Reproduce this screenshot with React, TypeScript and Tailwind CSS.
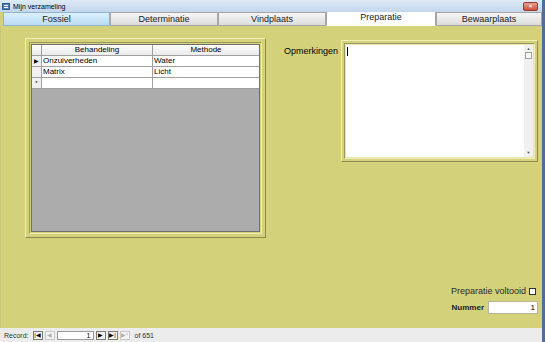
import React from "react";

const font = { fontFamily: '"Liberation Sans", Arial, sans-serif' };

function NavBtn({ children, dim }: { children: React.ReactNode; dim?: boolean }) {
  return (
    <div
      className={`w-[10px] h-[9px] flex items-center justify-center border ${dim ? "border-[#c8c8c8] text-[#b0b0b0]" : "border-[#7a7a7a] text-black"} bg-[#f4f4f4] text-[6px] leading-none`}
    >
      {children}
    </div>
  );
}

export default function App() {
  const tabs = [
    { label: "Fossiel", w: "w-[107px]", cls: "bg-gradient-to-b from-[#dcf0fc] to-[#b9dcf3] border-[#8eb4d0]" },
    { label: "Determinatie", w: "w-[108px]", cls: "bg-gradient-to-b from-[#f6f6f6] to-[#dcdcdc] border-[#a5a5a5]" },
    { label: "Vindplaats", w: "w-[108px]", cls: "bg-gradient-to-b from-[#f6f6f6] to-[#dcdcdc] border-[#a5a5a5]" },
    { label: "Preparatie", w: "w-[110px]", cls: "bg-white border-[#a5a5a5] border-b-white -mt-[1px] pb-[2px]" },
    { label: "Bewaarplaats", w: "w-[106px]", cls: "bg-gradient-to-b from-[#f6f6f6] to-[#dcdcdc] border-[#a5a5a5]" },
  ];
  return (
    <div style={font} className="w-[545px] h-[342px] flex flex-col bg-[#5d7fa6] overflow-hidden">
      {/* title bar */}
      <div className="h-[12px] flex items-center bg-gradient-to-b from-[#dfeaf7] to-[#c3d6ec] border-r-[3px] border-[#4f6f95] relative">
        <div className="ml-[2px] w-[8px] h-[7px] bg-[#4f7fbf] border border-[#2d5b96] flex flex-col justify-center gap-[1px] px-[1px]">
          <div className="h-[1px] bg-white"></div>
          <div className="h-[1px] bg-white"></div>
        </div>
        <span className="ml-[3px] text-[7px] leading-none text-black">Mijn verzameling</span>
        <div className="ml-auto mr-[4px] w-[15px] h-[9px] rounded-[2px] bg-gradient-to-b from-[#e8a090] to-[#c8503a] border border-[#9a3a2a] flex items-center justify-center text-white text-[6px] leading-none font-bold">
          ×
        </div>
      </div>
      {/* tabs */}
      <div className="h-[14px] flex items-stretch bg-[#d4d07a] pl-[3px] border-r-[3px] border-[#4f6f95]">
        {tabs.map((t) => (
          <div
            key={t.label}
            className={`${t.w} ${t.cls} border flex items-center justify-center text-[9px] leading-none text-[#222]`}
          >
            {t.label}
          </div>
        ))}
      </div>
      {/* body */}
      <div className="flex-1 flex bg-[#d4d17b] border-r-[3px] border-[#4f6f95] border-l border-l-[#c9c67a]">
        {/* subform */}
        <div className="pl-[24px] pt-[12px]">
          <div className="w-[241px] h-[200px] border border-t-[#f1efb6] border-l-[#f1efb6] border-r-[#8c8a52] border-b-[#8c8a52] p-[3px]">
            <div className="w-full h-full border border-t-[#9a9860] border-l-[#9a9860] border-r-[#f0eeb2] border-b-[#f0eeb2] p-[1px]">
              <div className="w-full h-full bg-[#acacac] border border-[#707070] flex flex-col text-[8px] leading-none text-black">
                <div className="flex h-[11px] bg-gradient-to-b from-[#fbfbfb] to-[#ececec] border-b border-[#a0a0a0]">
                  <div className="w-[10px] border-r border-[#a0a0a0]"></div>
                  <div className="w-[111px] border-r border-[#a0a0a0] flex items-center justify-center">Behandeling</div>
                  <div className="flex-1 flex items-center justify-center">Methode</div>
                </div>
                {[
                  ["▶", "Onzuiverheden", "Water"],
                  ["", "Matrix", "Licht"],
                  ["*", "", ""],
                ].map((r, i) => (
                  <div key={i} className="flex h-[11px] bg-white border-b border-[#a0a0a0]">
                    <div className="w-[10px] border-r border-[#a0a0a0] bg-[#f0f0f0] flex items-center justify-center text-[6px]">
                      {r[0]}
                    </div>
                    <div className="w-[111px] border-r border-[#a0a0a0] flex items-center pl-[1px]">{r[1]}</div>
                    <div className="flex-1 flex items-center pl-[1px]">{r[2]}</div>
                  </div>
                ))}
              </div>
            </div>
          </div>
        </div>
        {/* right */}
        <div className="flex-1 flex flex-col pr-[4px] pt-[14px] pb-[14px]">
          <div className="flex justify-end">
            <span className="text-[9px] leading-none text-black mt-[7px] mr-[3px]">Opmerkingen</span>
            <div className="w-[197px] h-[122px] border border-t-[#f1efb6] border-l-[#f1efb6] border-r-[#8c8a52] border-b-[#8c8a52] p-[2px]">
              <div className="w-full h-full border border-t-[#9a9860] border-l-[#9a9860] border-r-[#f0eeb2] border-b-[#f0eeb2] p-[1px] bg-[#e8e6b0]">
                <div className="w-full h-full bg-white flex">
                  <div className="flex-1 pt-[2px] pl-[1px]">
                    <div className="w-[1px] h-[9px] bg-black"></div>
                  </div>
                  <div className="w-[9px] bg-[#f0f0f0] flex flex-col items-center">
                    <div className="text-[4px] leading-none text-[#555] mt-[2px]">▲</div>
                    <div className="w-[7px] h-[7px] bg-[#f8f8f8] border border-[#a0a0a0] mt-[1px]"></div>
                    <div className="flex-1"></div>
                    <div className="text-[4px] leading-none text-[#555] mb-[2px]">▼</div>
                  </div>
                </div>
              </div>
            </div>
          </div>
          <div className="mt-auto flex flex-col items-end gap-[5px]">
            <div className="flex items-center mr-[2px]">
              <span className="text-[9px] leading-none text-[#2a2a2a]">Preparatie voltooid</span>
              <div className="ml-[3px] w-[7px] h-[7px] bg-white border border-[#333]"></div>
            </div>
            <div className="flex items-center">
              <span className="text-[8px] leading-none font-bold mr-[4px] text-[#202020]">Nummer</span>
              <div className="w-[50px] h-[13px] bg-white border border-[#b8b6a0] flex items-center justify-end pr-[2px] text-[8px] leading-none">
                1
              </div>
            </div>
          </div>
        </div>
      </div>
      {/* status bar */}
      <div className="h-[14px] bg-[#ececec] border-r-[3px] border-[#4f6f95] flex items-center pl-[4px] gap-[2px] text-[7px] leading-none text-[#333]">
        <span className="mr-[2px]">Record:</span>
        <NavBtn>|◀</NavBtn>
        <NavBtn dim>◀</NavBtn>
        <div className="w-[37px] h-[9px] bg-white border border-[#9a9a9a] flex items-center justify-end pr-[2px] text-[7px] text-black">1</div>
        <NavBtn>▶</NavBtn>
        <NavBtn>▶|</NavBtn>
        <NavBtn dim>▶*</NavBtn>
        <span className="ml-[3px]">of 651</span>
      </div>
    </div>
  );
}
